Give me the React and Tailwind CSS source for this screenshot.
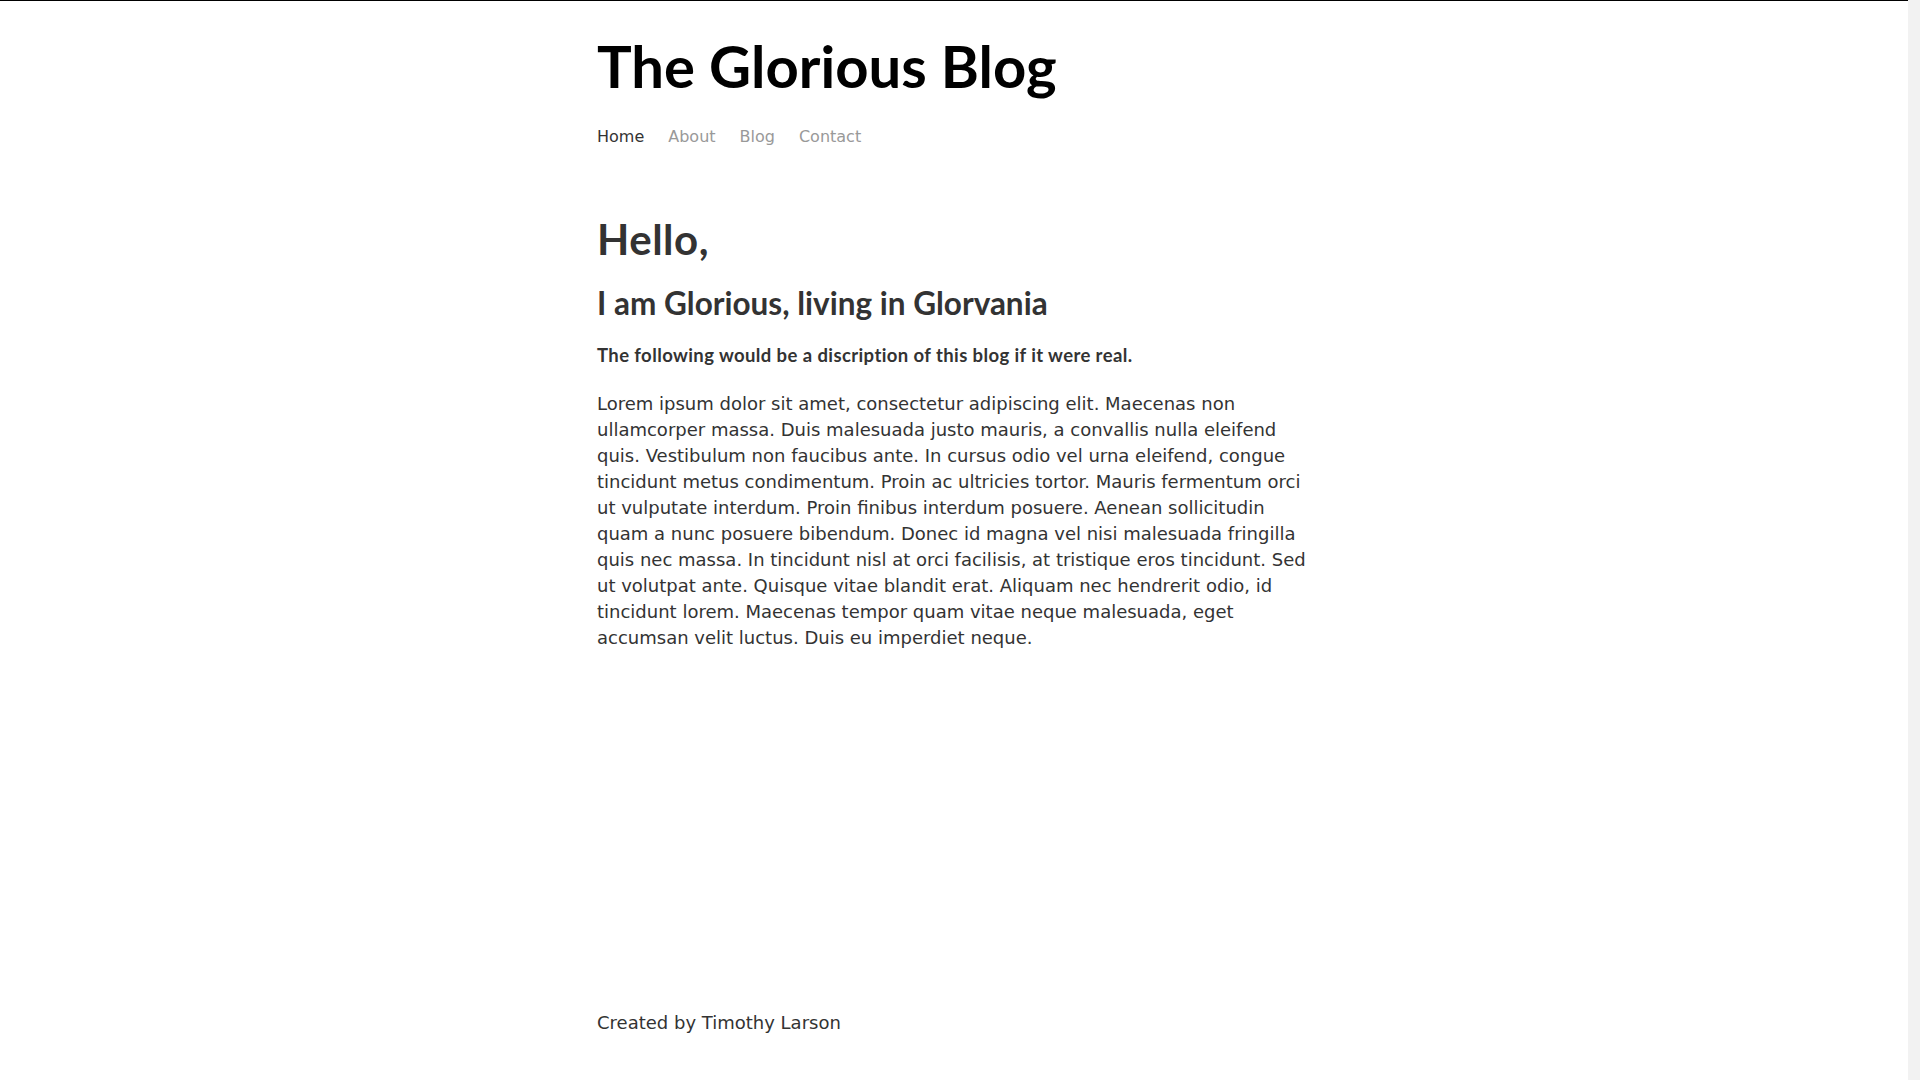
const links = ["Home", "About", "Blog", "Contact"];

const lorem =
    "Lorem ipsum dolor sit amet, consectetur adipiscing elit. Maecenas non ullamcorper massa. Duis malesuada justo mauris, a convallis nulla eleifend quis. Vestibulum non faucibus ante. In cursus odio vel urna eleifend, congue tincidunt metus condimentum. Proin ac ultricies tortor. Mauris fermentum orci ut vulputate interdum. Proin finibus interdum posuere. Aenean sollicitudin quam a nunc posuere bibendum. Donec id magna vel nisi malesuada fringilla quis nec massa. In tincidunt nisl at orci facilisis, at tristique eros tincidunt. Sed ut volutpat ante. Quisque vitae blandit erat. Aliquam nec hendrerit odio, id tincidunt lorem. Maecenas tempor quam vitae neque malesuada, eget accumsan velit luctus. Duis eu imperdiet neque.";

const App = () => {
    return (
        <div className="flex h-screen bg-white font-['DejaVu_Sans',sans-serif]">
            <div className="flex-1 flex flex-col border-t border-black">
                <div className="w-[714px] mx-auto flex flex-col flex-1">
                    {/* Header */}
                    <header>
                        <h1 className="mt-[36px] text-[58px] leading-none font-bold text-black font-['Lato',sans-serif]">
                            The Glorious Blog
                        </h1>
                        <nav className="mt-[30px] flex gap-6 text-base leading-6">
                            {links.map((link, i) => (
                                <a
                                    key={link}
                                    href="#"
                                    className={
                                        i === 0
                                            ? "text-[#333]"
                                            : "text-[#999] hover:text-[#333]"
                                    }
                                >
                                    {link}
                                </a>
                            ))}
                        </nav>
                    </header>

                    {/* Content */}
                    <main className="text-[#333]">
                        <h2 className="mt-[69px] text-[42px] leading-none font-bold tracking-[0.5px] font-['Lato',sans-serif]">
                            Hello,
                        </h2>
                        <h3 className="mt-[28px] text-[31.5px] leading-none font-bold font-['Lato',sans-serif]">
                            I am Glorious, living in Glorvania
                        </h3>
                        <p className="mt-[23px] text-[18.5px] leading-6 font-bold tracking-[0.4px] font-['Lato',sans-serif]">
                            The following would be a discription of this blog if it were real.
                        </p>
                        <p className="mt-[24px] text-lg leading-[26px]">
                            {lorem}
                        </p>
                    </main>

                    {/* Footer */}
                    <footer className="mt-auto pb-[43px] text-lg leading-[28px] text-[#333]">
                        Created by Timothy Larson
                    </footer>
                </div>
            </div>
            <div className="w-[12px] bg-[#f2f2f2]" />
        </div>
    );
};

export default App;
